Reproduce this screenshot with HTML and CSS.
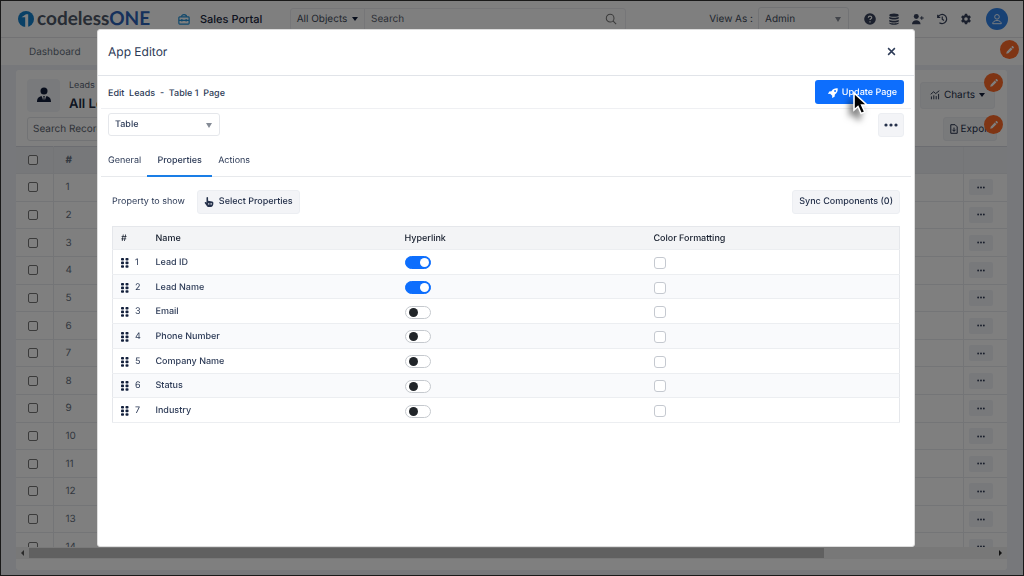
FILE: index.html
```html
<!DOCTYPE html>
<html lang="en">
<head>
<meta charset="utf-8">
<title>Sales Portal - App Editor</title>
<link rel="stylesheet" href="styles.css">
</head>
<body>
<svg class="sprite" aria-hidden="true">
  <symbol id="pencil" viewBox="0 0 16 16"><path d="M2 14l.7-3.400L9.200 4.100l2.700 2.700L5.400 13.300zM10 3.300l1.200-1.200c.5-.5 1.200-.5 1.700 0l1 1c.5.5.5 1.200 0 1.700L12.700 6z" fill="currentColor"/></symbol>
  <symbol id="grip" viewBox="0 0 8 10"><g fill="currentColor"><rect x="0" y="0" width="3" height="2.600" rx=".8"/><rect x="4.500" y="0" width="3" height="2.600" rx=".8"/><rect x="0" y="3.600" width="3" height="2.600" rx=".8"/><rect x="4.500" y="3.600" width="3" height="2.600" rx=".8"/><rect x="0" y="7.200" width="3" height="2.600" rx=".8"/><rect x="4.500" y="7.200" width="3" height="2.600" rx=".8"/></g></symbol>
  <symbol id="dots" viewBox="0 0 14 4"><g fill="currentColor"><circle cx="2" cy="2" r="1.600"/><circle cx="7" cy="2" r="1.600"/><circle cx="12" cy="2" r="1.600"/></g></symbol>
</svg>

<div class="app">
  <header class="topbar">
    <a class="logo" href="#"><svg class="logo-mark" viewBox="0 0 16 16"><circle cx="8" cy="8" r="8" fill="#1380cc"/><path d="M3.500 6.200L8 3.300h2.200V16H7.200V6.200z" fill="#fff"/></svg><span class="logo-text">codeless<b>ONE</b></span></a>
    <a class="portal" href="#"><svg class="icon-12" viewBox="0 0 14 14" fill="none" stroke="#2090d8" stroke-width="1.400"><rect x="1" y="4.500" width="12" height="8.500" rx="1"/><path d="M4 4.500C4 1 10 1 10 4.500M1 8.500h12M4.500 7v3M9.500 7v3"/></svg>Sales Portal</a>
    <form class="search">
      <button type="button" class="scope">All Objects <span class="caret"></span></button>
      <input type="text" placeholder="Search" aria-label="Search">
      <svg class="icon-12" viewBox="0 0 14 14" fill="none" stroke="#777" stroke-width="1.200"><circle cx="6" cy="6" r="4.500"/><path d="M9.300 9.300L13 13"/></svg>
    </form>
    <div class="view-as">
      <label for="role">View As :</label>
      <span class="select-wrap role-wrap"><select id="role"><option>Admin</option></select></span>
    </div>
    <div class="tools">
      <button aria-label="Help"><svg viewBox="0 0 14 14"><circle cx="7" cy="7" r="6.800" fill="currentColor"/><path d="M5 5.500C5 3 9 3 9 5.400 9 6.700 7 6.700 7 8.200M7 9.500v1.500" stroke="#fff" stroke-width="1.400" fill="none"/></svg></button>
      <button aria-label="Data"><svg viewBox="0 0 14 14" fill="currentColor"><ellipse cx="7" cy="2.500" rx="5.500" ry="2"/><path d="M1.500 4.300c2 1.600 9 1.600 11 0v2c-2 1.800-9 1.800-11 0zM1.500 7.800c2 1.600 9 1.600 11 0v2c-2 1.800-9 1.800-11 0zM1.500 11.200c2 1.400 9 1.400 11 0v1c-2 2-9 2-11 0z"/></svg></button>
      <button aria-label="Add user"><svg viewBox="0 0 14 14" fill="currentColor"><circle cx="5" cy="4" r="2.900"/><path d="M0 13c0-6 10-6 10 0zM10.800 3.800h1.200v1.500h1.700v1.200H12V8h-1.200V6.500H9.200V5.300h1.600z"/></svg></button>
      <button aria-label="History"><svg viewBox="0 0 14 14" fill="none" stroke="currentColor" stroke-width="1.400"><path d="M2 2v3h3M2.300 4.800A5.300 5.300 0 1 1 4 11.300M7.300 4v3.300l2 1.500"/></svg></button>
      <button aria-label="Settings"><svg viewBox="0 0 14 14"><path fill="currentColor" fill-rule="evenodd" d="M5.700 1h2.600l.4 1.700 1 .6 1.700-.5 1.300 2.200L11.400 6.200v1.600l1.300 1.200-1.300 2.200-1.700-.5-1 .6-.4 1.700H5.700l-.4-1.700-1-.6-1.700.5L1.300 9l1.300-1.200V6.200L1.300 5l1.300-2.200 1.700.5 1-.6zM7 4.900a2.100 2.100 0 1 0 0 4.200 2.100 2.100 0 0 0 0-4.200z"/></svg></button>
      <button class="avatar" aria-label="Account"><svg viewBox="0 0 14 14" fill="none" stroke="#fff" stroke-width="1.100"><circle cx="7" cy="4.500" r="2.700"/><path d="M2 12.500c0-5 10-5 10 0z"/></svg></button>
    </div>
  </header>
  <nav class="nav">
    <a href="#">Dashboard</a>
    <button class="edit edit-nav" aria-label="Edit menu"><svg><use href="#pencil"/></svg></button>
  </nav>

  <main class="content">
    <section class="card">
      <div class="card-head">
        <div class="object-icon"><svg viewBox="0 0 16 18"><circle cx="8" cy="4.500" r="4" fill="#101c38"/><path d="M0 17c0-4 2-6.500 5.500-6.500L7 15l.6-3L7 10h2l-.6 2L9 15l1.500-4.500C14 10.500 16 13 16 17z" fill="#101c38"/></svg></div>
        <div class="object-title"><span>Leads</span><h1>All Leads</h1></div>
        <button class="soft charts"><svg class="icon-10" viewBox="0 0 14 14" fill="none" stroke="currentColor" stroke-width="1.300"><path d="M2 9v4M5.300 7.500V13M8.700 8.500V13M12 5.500V13M1 6l4-3.500L8 5l5-4"/></svg>Charts<span class="caret"></span></button>
        <button class="edit edit-charts" aria-label="Edit charts"><svg><use href="#pencil"/></svg></button>
      </div>
      <div class="card-tools">
        <input class="record-search" type="text" placeholder="Search Records" aria-label="Search records">
        <button class="soft export"><svg class="icon-10" viewBox="0 0 12 14" fill="none" stroke="currentColor" stroke-width="1.400"><path d="M1.500 1h6l3 3v9h-9zM6 5v5M3.800 8L6 10.300 8.200 8"/></svg>Export</button>
        <button class="edit edit-export" aria-label="Edit export"><svg><use href="#pencil"/></svg></button>
      </div>
      <div class="records-box">
        <table class="records">
          <thead><tr><th class="pick"><input type="checkbox" aria-label="Select all"></th><th>#</th><th class="act"></th></tr></thead>
          <tbody id="records"></tbody>
        </table>
      </div>
      <div class="scrollbar"><span class="arrow-left"></span><span class="thumb"></span><span class="arrow-right"></span></div>
    </section>
  </main>
</div>

<div class="backdrop">
  <div class="modal" role="dialog" aria-labelledby="modal-title">
    <header class="modal-head">
      <h2 id="modal-title">App Editor</h2>
      <button class="close" aria-label="Close"><svg viewBox="0 0 8 8"><path d="M1 1l6 6M7 1L1 7" stroke="currentColor" stroke-width="1.300"/></svg></button>
    </header>
    <div class="edit-bar">
      <h3>Edit&nbsp; Leads&nbsp; -&nbsp; Table 1&nbsp; Page</h3>
      <button class="primary"><svg class="icon-10" viewBox="0 0 16 16"><path fill="currentColor" fill-rule="evenodd" d="M15.500.5C11 0 8 1.500 5.500 5L2 5.500 0 9.500l3.500-.3 3.300 3.300-.3 3.500 4-2 .5-3.500c3.500-2.500 5-5.500 4.500-10zM11.300 3.200a1.500 1.500 0 1 1 0 3 1.500 1.500 0 0 1 0-3z"/></svg>Update Page</button>
    </div>
    <div class="component-bar">
      <span class="select-wrap component-wrap"><select aria-label="Component"><option>Table</option></select></span>
      <button class="soft more" aria-label="More"><svg><use href="#dots"/></svg></button>
    </div>
    <nav class="tabs">
      <button>General</button><button class="active">Properties</button><button>Actions</button>
    </nav>
    <div class="property-bar">
      <span>Property to show</span>
      <button class="soft strong"><svg class="icon-10" viewBox="0 0 14 16"><path fill="currentColor" fill-rule="evenodd" d="M3 1.300C3-.2 5.500-.2 5.500 1.300V6l6.500 1.200c1.500.3 2 1 2 2.300 0 3-1 6.500-4.500 6.500H7c-2 0-3-1-4-2.500L.4 10c-1-1.400.7-2.500 1.800-1.500L3 9.300zM6 9.500v3h1v-3zM8.200 9.500v3h1v-3zM10.400 9.500v3h1v-3z"/></svg>Select Properties</button>
      <button class="soft strong sync">Sync Components (0)</button>
    </div>
    <div class="property-box">
      <table class="properties">
        <thead><tr><th class="num">#</th><th class="wide">Name</th><th class="wide">Hyperlink</th><th>Color Formatting</th></tr></thead>
        <tbody id="properties"></tbody>
      </table>
    </div>
  </div>
  <svg class="cursor" viewBox="0 0 18 26" aria-hidden="true"><path d="M2 2v17l4-3.500 3.200 7 3.600-1.600-3.100-6.900H15z" fill="#000" stroke="#fff" stroke-width="1.600"/></svg>
</div>
<script src="app.js"></script>
</body>
</html>
```
FILE: styles.css
```css
* { box-sizing: border-box; }
body { margin: 0; font-family: Inter, "Liberation Sans", sans-serif; font-size: 9px; line-height: 12px; text-rendering: geometricPrecision; color: #2c3a56; background: #eef0f6; }
button, input, select { font: inherit; color: inherit; text-rendering: inherit; }
button { display: flex; align-items: center; justify-content: center; padding: 0; border: 0; background: none; white-space: nowrap; }
h1, h2, h3 { margin: 0; }
a { color: inherit; text-decoration: none; }
input[type="checkbox"] { display: block; appearance: none; margin: 0; background: #fff; }
.sprite { position: absolute; width: 0; height: 0; }
.icon-12 { width: 12px; height: 12px; flex: none; }
.icon-10 { width: 10px; height: 10px; flex: none; }
.caret { border: 3px solid transparent; border-top: 4px solid #101c38; border-bottom: 0; }

.app { display: flex; flex-direction: column; height: 100vh; border: 1px solid #333; overflow: hidden; }
.topbar { display: flex; align-items: center; height: 37px; padding: 0 15px 0 17px; flex: none; background: #fff; border-bottom: 1px solid #e4e4e8; font-size: 10px; color: #444d5c; }
.logo { display: flex; align-items: center; width: 160px; gap: 3px; }
.logo-mark { width: 16px; height: 16px; flex: none; }
.logo-text { font-family: Lato, sans-serif; font-size: 19px; line-height: 20px; font-weight: 700; color: #4e5868; }
.logo-text b { font-weight: 700; color: #2c62b8; }
.portal { display: flex; align-items: center; gap: 10px; width: 112px; font-size: 11px; font-weight: 500; color: #182540; white-space: nowrap; }
.search { display: flex; align-items: center; flex: 0 1 336px; height: 23px; padding-right: 8px; border: 1px solid #ececf0; border-radius: 3px; }
.scope { gap: 5px; height: 100%; width: 74px; border-right: 1px solid #ececf0; }
.search input { flex: 1; min-width: 0; padding: 0 6px; border: 0; outline: 0; background: none; }
::placeholder { color: #5c6370; opacity: 1; }
.view-as { display: flex; align-items: center; gap: 5px; margin-left: auto; }
.select-wrap { position: relative; display: block; }
.select-wrap::after { content: ""; position: absolute; right: 8px; top: 50%; margin-top: -2px; border: 3px solid transparent; border-top: 5px solid #858b96; border-bottom: 0; pointer-events: none; }
select { appearance: none; width: 100%; height: 100%; padding: 0 6px; border: 1px solid #e5e7eb; border-radius: 3px; background: #fff; }
.role-wrap { width: 91px; height: 25px; }
.tools { display: flex; align-items: center; gap: 12px; padding-left: 15px; color: #36415a; }
.tools svg { width: 12px; height: 12px; display: block; }
.tools .avatar { width: 22px; height: 22px; margin-left: 2px; border-radius: 50%; background: #3183e8; }

.nav { position: relative; display: flex; align-items: center; height: 27px; padding: 0 28px; flex: none; background: #fff; font-size: 10px; color: #667080; }
.edit { position: absolute; z-index: 1; width: 19px; height: 19px; border-radius: 50%; background: #ff6a28; color: #fff; }
.edit svg { width: 10px; height: 10px; }
.edit-nav { right: 4px; top: 2px; }

.content { display: flex; flex: 1; min-height: 0; padding: 5px 16px 5px 15px; }
.card { display: flex; flex-direction: column; flex: 1; min-width: 0; background: #fff; border-radius: 3px; }
.card-head { position: relative; display: flex; align-items: center; gap: 9px; height: 45px; padding: 5px 12px 0 11px; }
.object-icon { display: flex; align-items: center; justify-content: center; width: 33px; height: 33px; border-radius: 4px; background: #f3f4f8; }
.object-icon svg { width: 14px; height: 16px; }
.object-title { display: flex; flex-direction: column; gap: 5px; color: #5a6474; }
.object-title h1 { font-size: 13px; line-height: 14px; font-weight: 600; color: #202b42; white-space: nowrap; }
.soft { gap: 5px; height: 24px; padding: 0 8px; border: 1px solid #eceef2; border-radius: 3px; background: #f3f4f7; color: #25314b; }
.charts { width: 75px; height: 27px; margin-left: auto; gap: 4px; font-size: 10px; }
.edit-charts { right: 4px; top: 3px; }
.card-tools { position: relative; display: flex; align-items: center; justify-content: space-between; height: 31px; padding: 0 10px 3px 11px; }
.record-search { width: 150px; height: 24px; padding: 0 5px; border: 1px solid #e4e6ea; border-radius: 3px; background: #fff; font-size: 10px; }
.export { width: 54px; font-size: 10px; gap: 2px; }
.edit-export { right: 4px; top: 0; }
.records-box { flex: 1; min-height: 0; overflow: hidden; }
.records { width: 100%; height: 415px; border-collapse: collapse; font-size: 10px; color: #667080; }
.records th { height: 27px; background: #eef0f5; border-top: 1px solid #d8dbe2; }
.records th, .records td { padding: 0 12px; text-align: left; border-bottom: 1px solid #e9ebef; }
.records .pick { width: 37px; padding: 0 12px; border-right: 1px solid #e9ebef; }
.records .act { width: 44px; padding: 0 5px; border-left: 1px solid #e9ebef; }
.records input { width: 10px; height: 10px; border: 1px solid #777; border-radius: 2px; }
.row-more { width: 24px; height: 16px; border-radius: 2px; background: #f0f2f7; color: #303b55; }
.row-more svg { width: 8px; height: 3px; }
.scrollbar { display: flex; align-items: center; height: 12px; margin-bottom: 11px; padding: 0 5px; background: #f1f1f1; }
.thumb { width: 81%; height: 10px; margin-left: 5px; background: #c1c1c1; }
.arrow-left { border: 3px solid transparent; border-right: 3px solid #555; border-left: 0; }
.arrow-right { margin-left: auto; border: 3px solid transparent; border-left: 3px solid #222; border-right: 0; }

.backdrop { position: fixed; inset: 0; z-index: 5; display: flex; justify-content: center; padding: 29px 12px 29px 0; background: rgba(0, 0, 0, .5); }
.modal { display: flex; flex-direction: column; width: 818px; border: 1px solid #ddd; border-radius: 3px; background: #fff; }
.modal-head { display: flex; align-items: center; justify-content: space-between; height: 46px; padding: 0 18px 2px 10px; border-bottom: 1px solid #e1e4e9; }
.modal-head h2 { font-size: 12px; line-height: 16px; font-weight: 400; }
.close svg { width: 9px; height: 9px; }
.edit-bar { display: flex; align-items: center; justify-content: space-between; height: 33px; margin: 0 3px; padding: 0 7px; border-bottom: 1px solid #eff0f3; }
.edit-bar h3 { padding-top: 3px; font-size: 9px; line-height: 12px; font-weight: 500; }
.primary { gap: 4px; width: 89px; height: 24px; padding: 1px 0 0 6px; border-radius: 3px; background: #0d6efd; color: #fff; font-weight: 500; }
.component-bar { display: flex; align-items: center; justify-content: space-between; height: 31px; padding: 0 10px; }
.component-wrap { width: 112px; height: 23px; font-weight: 500; }
.more { width: 26px; padding: 0; }
.more svg { width: 14px; height: 4px; }
.tabs { display: flex; height: 37px; margin: 0 3px; padding-left: 1px; border-bottom: 1px solid #e7e9ec; }
.tabs button { height: 37px; padding: 6px 6px 0; border-bottom: 2px solid transparent; }
.tabs .active { width: 65px; font-weight: 500; border-color: #1a7ee6; }
.property-bar { display: flex; align-items: center; gap: 12px; height: 49px; padding: 0 14px; }
.property-bar .strong { padding: 0 6px; font-weight: 500; }
.property-bar .sync { margin-left: auto; }
.property-box { padding: 0 14px; }
.properties { width: 100%; height: 197px; table-layout: fixed; border-collapse: collapse; border: 1px solid #e5e7eb; font-weight: 500; }
.properties th { height: 23px; background: #f3f4f6; font-weight: 500; color: #151d2c; }
.properties th, .properties td { padding: 2px 8px 0; text-align: left; border-bottom: 1px solid #eceef1; }
.properties .num { width: 35px; }
.properties .wide { width: 249px; }
.properties tbody tr:nth-child(even) { background: #f9fafc; }
.handle { display: flex; align-items: center; gap: 6px; font-weight: 400; }
.handle svg { width: 8px; height: 10px; flex: none; color: #13203c; }
.switch { position: relative; width: 26px; height: 13px; border: 1px solid #c5c9ce; border-radius: 7px; }
.switch::before { content: ""; position: absolute; left: 3px; top: 1px; width: 9px; height: 9px; border-radius: 50%; background: #212529; }
.properties .switch:checked { background: #0d6efd; border-color: #0d6efd; }
.switch:checked::before { left: 14px; background: #fff; }
.color { width: 12px; height: 12px; border: 1px solid #c5c9d0; border-radius: 3px; }
.cursor { position: absolute; left: 852px; top: 91px; width: 18px; height: 26px; filter: drop-shadow(-4px 6px 3px rgba(0, 0, 0, .5)); }
```
FILE: app.js
```javascript
const records = document.getElementById('records');
for (let i = 1; i <= 14; i++) {
  records.insertAdjacentHTML('beforeend',
    `<tr><td class="pick"><input type="checkbox" aria-label="Select record ${i}"></td><td>${i}</td>
     <td class="act"><button class="row-more" aria-label="Record ${i} actions"><svg><use href="#dots"/></svg></button></td></tr>`);
}

const fields = ['Lead ID', 'Lead Name', 'Email', 'Phone Number', 'Company Name', 'Status', 'Industry'];
const linked = ['Lead ID', 'Lead Name'];
const properties = document.getElementById('properties');
fields.forEach((name, i) => {
  properties.insertAdjacentHTML('beforeend',
    `<tr><td><span class="handle"><svg><use href="#grip"/></svg>${i + 1}</span></td><td>${name}</td>
     <td><input class="switch" type="checkbox" role="switch" aria-label="${name} hyperlink" ${linked.includes(name) ? 'checked' : ''}></td>
     <td><input class="color" type="checkbox" aria-label="${name} color formatting"></td></tr>`);
});
```
